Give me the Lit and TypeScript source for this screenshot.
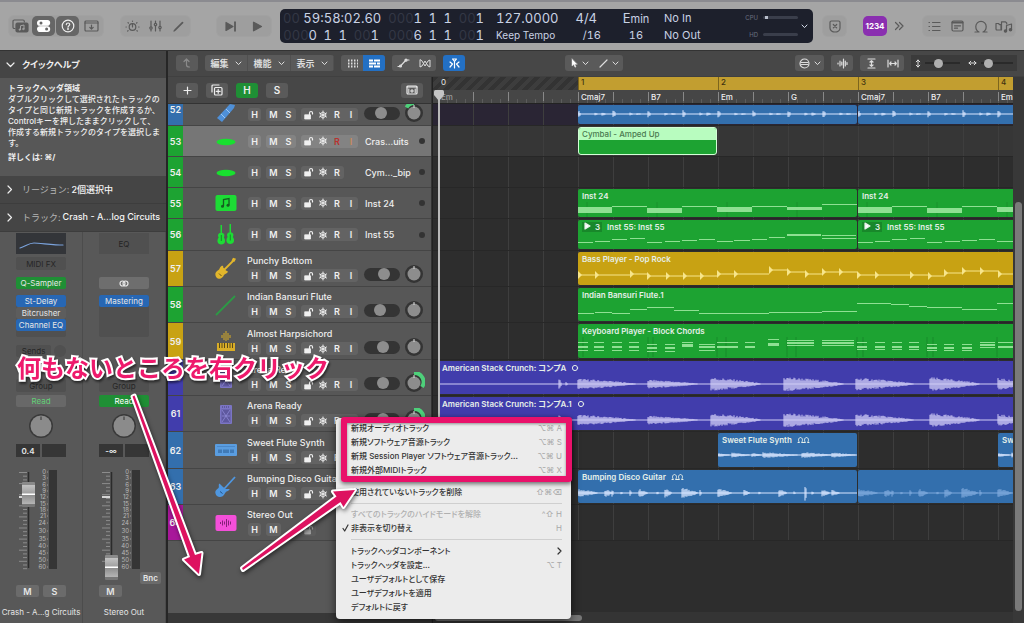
import { LitElement, html, svg, css, nothing } from "lit";
import { customElement, property } from "lit/decorators.js";
import { classMap } from "lit/directives/class-map.js";
import { styleMap } from "lit/directives/style-map.js";

const shared = css`
  * { box-sizing: border-box; }
  button, input { font: inherit; color: inherit; margin: 0; padding: 0; border: 0; background: none; }
  button { display: flex; align-items: center; justify-content: center; white-space: nowrap; line-height: 1; }
  svg { display: block; flex: none; }
  h2, p, ul, ol { margin: 0; padding: 0; list-style: none; font-weight: inherit; font-size: inherit; }
`;

type Shape = unknown;
const icon = (w: number, h: number, body: Shape) => html`<svg width=${w} height=${h} viewBox="0 0 ${w} ${h}" fill="none"
  stroke="currentColor" stroke-width="1.2" stroke-linecap="round" stroke-linejoin="round" aria-hidden="true">${body}</svg>`;

const chevron = () => icon(7, 5, svg`<path d="M1 1 3.500 3.600 6 1" stroke-width="1"/>`);

/* ---------------------------------------------------------------- toolbar */

const barIcons: Record<string, Shape> = {
  library: icon(17, 14, svg`<path d="M3 9.500H2.300A1.300 1.300 0 0 1 1 8.200V2.300A1.300 1.300 0 0 1 2.300 1H11a1.300 1.300 0 0 1 1.300 1.300V3"/>
    <rect x="4" y="4" width="12" height="9" rx="1.500" fill="currentColor"/>
    <path d="M8.500 10.500V6.800L12 6v3.800" stroke="#a2a2a2" stroke-width="1"/><circle cx="7.800" cy="10.600" r=".8" fill="#a2a2a2" stroke="#a2a2a2" stroke-width=".6"/><circle cx="11.300" cy="10" r=".8" fill="#a2a2a2" stroke="#a2a2a2" stroke-width=".6"/>`),
  inspector: icon(14, 12, svg`<rect x=".6" y=".6" width="12" height="4.600" rx="2.300" fill="#fff" stroke="#fff"/><circle cx="4" cy="2.900" r="1.500" fill="#666" stroke="none"/>
    <rect x=".6" y="6.800" width="12" height="4.600" rx="2.300" fill="#fff" stroke="#fff"/><circle cx="9.600" cy="9.100" r="1.500" fill="#666" stroke="none"/>`),
  help: icon(14, 14, svg`<circle cx="7" cy="7" r="5.800"/><path d="M5.300 5.600C5.400 3.400 8.800 3.500 8.700 5.500 8.700 6.700 7 6.700 7 8.200"/><circle cx="7" cy="10" r=".4"/>`),
  drop: icon(15, 12, svg`<rect x="1" y="1" width="13" height="10" rx="1"/><path d="M1 3h13M7.500 5v4M5.800 7.400l1.700 1.700 1.700-1.700"/>`),
  dial: icon(15, 13, svg`<circle cx="7.500" cy="7" r="3.300"/><path d="M7.500 7V4M7.500 1v.3M3 2.600l.4.4M12 2.600l-.4.4M1 7h.3M14 7h-.3M2.700 11l.4-.4M12.300 11l-.4-.4"/>`),
  mixer: icon(13, 12, svg`<path d="M2 1v5.500M2 9.500V11M6.500 1v2M6.500 6V11M11 1v5M11 9V11"/><circle cx="2" cy="8" r="1.200"/><circle cx="6.500" cy="4.500" r="1.200"/><circle cx="11" cy="7.500" r="1.200"/>`),
  pencil: icon(11, 11, svg`<path d="M2.200 8.800 9.500 1.700" stroke-width="1.800"/><path d="M1 10l.7-.7"/>`),
  next: icon(14, 11, svg`<path d="M2 1.500v8l7-4z" fill="currentColor"/><path d="M11 1.200v8.600" stroke-width="1.800"/>`),
  play: icon(11, 11, svg`<path d="M1.500 1.200v8.600l8-4.300z" fill="currentColor"/>`),
  replace: icon(12, 13, svg`<path d="M1 2.500C1 1.600 1.600 1 2.500 1h7c.9 0 1.500.6 1.500 1.500V8c0 2.500-2.500 4-5 4S1 10.500 1 8z"/><path d="M4.300 4.500l3.400 3.400M7.700 4.500 4.300 7.900"/>`),
  more: icon(10, 10, svg`<path d="M1.500 1.500 5 5 1.500 8.500M5.500 1.500 9 5 5.500 8.500"/>`),
  list: icon(13, 11, svg`<path d="M4.500 1.500H12M4.500 5.500H12M4.500 9.500H12M1 1.500h.5M1 5.500h.5M1 9.500h.5"/>`),
  note: icon(13, 12, svg`<rect x="1" y="1" width="11" height="10" rx="1.500"/><path d="M1.500 2.500h10" stroke-width="2"/><path d="M3.500 5.800h6M3.500 8.200h3"/>`),
  loop: icon(14, 13, svg`<path d="M1 12h4C2.800 11 1.800 9 1.800 6.500a5.200 5.200 0 0 1 10.400 0C12.200 9 11.200 11 9 12h4"/>`),
  media: icon(18, 13, svg`<path d="M3.500 10H2a1 1 0 0 1-1-1V3.500h2.500l1 1.200H6V10H4M6.500 10V1.800h4l1.200 1.200v1"/><path d="M11.500 11V5.500L16.500 4v5.600"/><circle cx="10.500" cy="11" r="1.200" fill="currentColor"/><circle cx="15.500" cy="9.800" r="1.200" fill="currentColor"/>`),
};

@customElement("control-bar")
class ControlBar extends LitElement {
  static styles = [shared, css`
    :host { display: grid; grid-template-columns: 280px minmax(0, 533px) 1fr; align-items: center; height: 50px;
      background: #a5a5a5; border-top: 2px solid #8b8b90; color: #5a5a5a; }
    .left, .right { display: flex; align-items: center; }
    .left { padding-left: 9px; }
    .right { padding: 0 9px 0 10px; }
    .group { display: flex; border-radius: 5px; background: #9e9e9e; box-shadow: 0 0 0 1px #9a9a9a55; }
    .group button { width: 23px; height: 20px; border-radius: 5px; }
    .group.play button { width: 27px; }
    .modes { margin-left: 18px; }
    .play { margin-left: 27px; }
    button.on { background: #666; color: #eee; margin-right: 1px; }
    .count { width: 24px; height: 20px; margin-left: 17px; border-radius: 5px; background: #8a2fb0; color: #fff; font-size: 8px; font-weight: 700; }
    .more { margin-left: 7px; }
    .views { margin-left: auto; }
    .lcd { display: flex; height: 34px; padding: 0 5px 0 3px; background: #1d202c; border-radius: 5px; color: #c9d2e4; overflow: hidden; }
    .lcd > div { display: grid; grid-template-rows: 17px 17px; align-items: center; white-space: nowrap; }
    .num { font-size: 13px; font-variant-numeric: tabular-nums; }
    .ghost { color: #333745; }
    .row { display: flex; }
    .row i { font-style: normal; width: 15px; text-align: right; }
    .row .wide { width: 34px; text-align: right; }
    .row .mid { width: 32px; text-align: right; }
    .time { width: 97px; }
    .pos { width: 103px; padding-left: 8px; }
    .tempo { width: 62px; margin-left: 13px; }
    .small { font-size: 11px; }
    .tempo .small { font-size: 10px; }
    .sig { width: 43px; text-align: right; }
    .sig span:first-child { padding-right: 4px; }
    .key { width: 44px; margin-left: 13px; text-align: center; }
    .midi { width: 80px; margin-left: 6px; }
    .load { width: 54px; font-size: 6px; color: #6b7080; }
    .load span { display: flex; align-items: center; gap: 5px; }
    .load b { flex: 1; height: 3px; border-radius: 2px; background: #3a3e4b; }
    .load b.used { background: linear-gradient(to right, #3a3e4b 2px, #b9bfcc 2px 5px, #3a3e4b 5px); }
    .load em { width: 14px; font-style: normal; text-align: right; }
    .open { margin-left: auto; color: #d5dcea; }
  `];

  private button(name: string, label: string, on = false) {
    return html`<button class=${classMap({ on })} aria-label=${label}>${barIcons[name]}</button>`;
  }

  render() {
    return html`
      <div class="left">
        <div class="group">${this.button("library", "Library")}${this.button("inspector", "Inspector", true)}${this.button("help", "Quick Help", true)}${this.button("drop", "Toolbar")}</div>
        <div class="group modes">${this.button("dial", "Smart Controls")}${this.button("mixer", "Mixer")}${this.button("pencil", "Editors")}</div>
        <div class="group play">${this.button("next", "Forward")}${this.button("play", "Play")}</div>
      </div>
      <div class="lcd">
        <div class="time num"><span><span class="ghost">00</span> 59:58:02.60</span>
          <span class="row"><span class="wide"><span class="ghost">000</span>0</span><i>1</i><i>1</i><span class="mid"><span class="ghost">00</span>1</span></span></div>
        <div class="pos num">
          ${["1", "6"].map((n) => html`<span class="row"><span class="wide"><span class="ghost">000</span>${n}</span><i>1</i><i>1</i><span class="mid"><span class="ghost">00</span>1</span></span>`)}
        </div>
        <div class="tempo num"><span>127.0000</span><span class="small">Keep Tempo</span></div>
        <div class="sig num"><span>4/4</span><span class="small">/16</span></div>
        <div class="key num"><span>E<span class="small">min</span></span><span class="small">16</span></div>
        <div class="midi small"><span>No In</span><span>No Out</span></div>
        <div class="load"><span><em>CPU</em><b class="used"></b></span><span><em>HD</em><b></b></span></div>
        <button class="open" aria-label="Display mode">${chevron()}</button>
      </div>
      <div class="right">
        <div class="group">${this.button("replace", "Replace")}</div>
        <button class="count" aria-label="Count-in">1234</button>
        <button class="more" aria-label="More">${barIcons.more}</button>
        <div class="group views">${this.button("list", "Lists")}${this.button("note", "Notes")}${this.button("loop", "Loops")}${this.button("media", "Media")}</div>
      </div>`;
  }
}

/* -------------------------------------------------------------- inspector */

const scale: [string, number][] = [["0", 2], ["3", 8], ["6", 15], ["9", 21], ["12", 27], ["15", 34], ["18", 40], ["21", 46],
  ["24", 53], ["30", 61], ["35", 69], ["40", 76], ["45", 83], ["50", 90], ["60", 97]];

@customElement("channel-strip")
class ChannelStrip extends LitElement {
  @property({ type: Boolean }) output = false;
  @property() name = "";

  static styles = [shared, css`
    :host { display: flex; flex-direction: column; align-items: center; padding: 1px 16px 0; border-right: 1px solid #4c4c4c; font-size: 8px; color: #e6e6e6; min-width: 0; }
    button, .slot { width: 50px; height: 12px; border-radius: 2px; }
    .eq { display: grid; place-items: center; width: 50px; height: 21px; background: #333539; }
    .output .eq { background: #505050; color: #242424; }
    .strip { display: flex; flex-direction: column; align-items: center; width: 50px; }
    .dim { background: #505050; color: #262626; }
    .fx { margin-top: 3px; height: 13px; }
    .inst { margin-top: 7px; background: #1f8f35; }
    .output .inst { background: #6e6e6e; }
    .inserts { display: flex; flex-direction: column; margin-top: 6px; width: 50px; height: 42px; background: #505050; border-radius: 2px; }
    .blue { background: #2767b4; }
    .grey { background: #5d5d5d; }
    .sends { display: flex; gap: 3px; width: 50px; margin-top: 8px; }
    .sends button { width: 36px; }
    .sends .round { width: 12px; border-radius: 6px; }
    .hidden { visibility: hidden; }
    .group { margin-top: 22px; height: 13px; }
    .read { margin-top: 3px; background: #686868; color: #63cf77; }
    .output .read { background: #1f8f35; color: #fff; }
    .knob { margin: 6px 0 5px; }
    .values { display: flex; gap: 2px; }
    .values span { display: grid; place-items: center; width: 24px; height: 13px; background: #363636; font-weight: 600; }
    .fader { display: grid; margin-top: 13px; width: 50px; height: 102px; }
    .fader > * { grid-area: 1 / 1; }
    .fader svg { overflow: visible; }
    .fader input { -webkit-appearance: none; appearance: none; writing-mode: vertical-lr; direction: rtl; width: 13px; height: 114px; margin-left: 6px; }
    .fader input::-webkit-slider-thumb { -webkit-appearance: none; width: 13px; height: 25px; border-radius: 1px;
      background: linear-gradient(#8a8a8a 0 3px, #c3c3c3 3px, #a2a2a2 11px, #fff 12px 13px, #8e8e8e 13px, #b5b5b5 22px, #777 22px); }
    text { font-size: 6px; fill: #b8b8b8; stroke: none; }
    .ms { display: flex; gap: 4px; width: 50px; margin-top: 11px; }
    .ms button { width: 23px; background: #6b6b6b; font-weight: 600; font-size: 9px; }
    .bnc { display: flex; justify-content: flex-end; height: 2px; width: 48px; margin-left: 26px; }
    .bnc button { width: 21px; background: #6b6b6b; font-weight: 600; flex: none; }
    .name { margin: 10px -16px 0; font-size: 8px; white-space: nowrap; }
  `];

  render() {
    const out = this.output;
    return html`<div class=${classMap({ strip: true, output: out })}>
      <div class="eq">${out ? "EQ" : icon(48, 20, svg`<path d="M3 14C9 12 12 9 17 9s20 2 29 2" stroke="#7aa2dc"/>`)}</div>
      ${out ? html`<div class="fx"></div>` : html`<button class="fx dim">MIDI FX</button>`}
      <button class="inst">${out ? icon(10, 7, svg`<circle cx="3.500" cy="3.500" r="2.500"/><circle cx="6.500" cy="3.500" r="2.500"/>`) : "Q-Sampler"}</button>
      <div class="inserts">${out ? html`<button class="blue">Mastering</button>` : html`<button class="blue">St-Delay</button><button class="grey">Bitcrusher</button><button class="blue">Channel EQ</button>`}</div>
      <div class=${classMap({ sends: true, hidden: out })}><button class="dim">Sends</button><button class="dim round" aria-label="Send level"></button></div>
      <button class="group dim">Group</button>
      <button class="read">Read</button>
      <svg class="knob" width="26" height="26" viewBox="0 0 26 26" role="img" aria-label="Pan"><circle cx="13" cy="13" r="12" fill="#3a3a3a"/><circle cx="13" cy="13" r="10.500" fill="#8b8b8b"/><path d="M13 3.500v3.500" stroke="#333"/><path d="M7 25h12v2H7z" fill="#585858"/></svg>
      <div class="values"><span>${out ? "-∞" : "0.4"}</span><span></span></div>
      <div class="fader">
        <svg width="50" height="102" viewBox="0 0 50 102" aria-hidden="true">
          <path d="M12.500 2v96" stroke="#2b2b2b" stroke-width="1.500"/>
          ${Array.from({ length: 27 }, (_, i) => {
            const y = 2.5 + i * 3.7;
            return svg`<path d="M${i % 3 ? 7 : 3} ${y}H11" stroke="#999" stroke-width=".8"/>`;
          })}
          <path d="M3 27h8" stroke="#fff" stroke-width="1.500"/>
          <rect x="33" y="0" width="8" height="99" fill="#353535"/>
          ${scale.map(([t, y]) => svg`<text x="30" y=${y + 2} text-anchor="end">${t}</text><path d="M31 ${y}h1" stroke="#999"/>`)}
        </svg>
        <input type="range" aria-label="Volume" min="0" max="100" .value=${out ? "5" : "87"} />
      </div>
      ${out ? html`<div class="bnc"><button>Bnc</button></div>` : html`<div class="bnc"></div>`}
      <div class="ms"><button>M</button>${out ? nothing : html`<button>S</button>`}</div>
      <div class="name">${this.name}</div>
    </div>`;
  }
}

@customElement("inspector-panel")
class InspectorPanel extends LitElement {
  static styles = [shared, css`
    :host { display: flex; flex-direction: column; background: #585858; border-right: 2px solid #262626; color: #eee; overflow: hidden; }
    h2, .row { display: flex; align-items: center; gap: 7px; height: 27px; padding-left: 6px; background: #454545; font-size: 9px; font-weight: 600; flex: none; }
    h2 { font-feature-settings: "palt"; }
    .row { height: 28px; gap: 9px; padding-left: 7px; font-weight: 400; color: #b5b5b5; border-bottom: 1px solid #3d3d3d; white-space: nowrap; }
    .row span { display: flex; gap: 2px; }
    .row svg { color: #eee; }
    .row b { font-weight: 500; color: #f4f4f4; }
    .help { height: 98px; padding: 4px 8px 0; font-size: 8px; font-weight: 500; line-height: 11px; background: #575757; flex: none; white-space: nowrap; }
    .help b { display: block; font-weight: 700; line-height: 12px; }
    .help p + b { margin-top: 2px; }
    .strips { display: grid; grid-template-columns: 1fr 1fr; flex: 1; }
  `];
  render() {
    const closed = icon(6, 9, svg`<path d="M1 1l3.500 3.500L1 8"/>`);
    return html`
      <h2>${icon(9, 6, svg`<path d="M1 1l3.500 3.500L8 1"/>`)}クイックヘルプ</h2>
      <div class="help"><b>トラックヘッダ領域</b>
        <p>ダブルクリックして選択されたトラックの<br />タイプと同じ新規トラックを作成するか、<br />Controlキーを押したままクリックして、<br />作成する新規トラックのタイプを選択しま<br />す。</p>
        <b>詳しくは: ⌘/</b></div>
      <div class="row">${closed}<span>リージョン:<b>2個選択中</b></span></div>
      <div class="row">${closed}<span>トラック:<b>Crash - A...log Circuits</b></span></div>
      <div class="strips"><channel-strip name="Crash - A...g Circuits"></channel-strip><channel-strip output name="Stereo Out"></channel-strip></div>`;
  }
}

/* ----------------------------------------------------------------- tracks */

interface Region { col: number; span: number; title?: string; badge?: boolean; mark?: string; art?: string; kind?: string; }
interface Track { n: string; h: number; color: string; name?: string; glyph: string; short?: boolean; selected?: boolean; last?: boolean; noInput?: boolean;
  vol?: number; green?: string; regions?: Region[]; }

const GREEN = "#1da332", GOLD = "#c8a213", VIOLET = "#413dac", BLUE = "#336fad";

const tracks: Track[] = [
  { n: "52", h: 22, color: BLUE, glyph: "stick", vol: 45, green: "M5.500 7.500A9 9 0 0 1 13 3", regions: [{ col: 5, span: 8, art: "hits" }, { col: 13, span: 5, art: "hits" }] },
  { n: "53", h: 31, color: GREEN, glyph: "cymbal", name: "Cras...uits", short: true, selected: true, regions: [{ col: 5, span: 4, title: "Cymbal - Amped Up", kind: "picked" }] },
  { n: "54", h: 31, color: GREEN, glyph: "cymbal", name: "Cym..._bip", short: true, noInput: true },
  { n: "55", h: 31, color: GREEN, glyph: "music", name: "Inst 24", short: true, regions: [{ col: 5, span: 8, title: "Inst 24", art: "inst24" }, { col: 13, span: 5, title: "Inst 24", art: "inst24" }] },
  { n: "56", h: 32, color: GREEN, glyph: "violins", name: "Inst 55", short: true, regions: [{ col: 5, span: 8, title: "Inst 55: Inst 55", badge: true, art: "inst55" }, { col: 13, span: 5, title: "Inst 55: Inst 55", badge: true, art: "inst55" }] },
  { n: "57", h: 36, color: GOLD, glyph: "bass", name: "Punchy Bottom", vol: 66, regions: [{ col: 5, span: 13, title: "Bass Player - Pop Rock", art: "bass" }] },
  { n: "58", h: 36, color: GREEN, glyph: "flute", name: "Indian Bansuri Flute", vol: 38, regions: [{ col: 5, span: 13, title: "Indian Bansuri Flute.1", art: "flute" }] },
  { n: "59", h: 37, color: GOLD, glyph: "keys", name: "Almost Harpsichord", vol: 58, regions: [{ col: 5, span: 13, title: "Keyboard Player - Block Chords", art: "chords", kind: "green" }] },
  { n: "60", h: 36, color: VIOLET, glyph: "amp", name: "Arena Ready", vol: 60, green: "M13 3A9 9 0 0 1 21 17", regions: [{ col: 1, span: 17, title: "American Stack Crunch: コンプA", mark: "ring", art: "crunch" }] },
  { n: "61", h: 36, color: VIOLET, glyph: "amp", name: "Arena Ready", vol: 60, green: "M13 3A9 9 0 0 1 21 17", regions: [{ col: 1, span: 17, title: "American Stack Crunch: コンプA.1", mark: "ring", art: "crunch" }] },
  { n: "62", h: 37, color: BLUE, glyph: "synth", name: "Sweet Flute Synth", vol: 50, regions: [{ col: 9, span: 4, title: "Sweet Flute Synth", mark: "loop", art: "synth" }, { col: 17, span: 4, title: "Sweet Flute Synth", art: "synth" }] },
  { n: "63", h: 36, color: BLUE, glyph: "guitar", name: "Bumping Disco Guitar", vol: 50, regions: [{ col: 5, span: 8, title: "Bumping Disco Guitar", mark: "loop", art: "disco" }, { col: 13, span: 5, art: "disco", kind: "faded" }] },
  { n: "64", h: 36, color: "#a8179a", glyph: "output", name: "Stereo Out", last: true },
];

const glyphs: Record<string, Shape> = {
  stick: svg`<path d="M3 15 16 1l5 1-1 3L8 19z" fill="#4f90d8"/><path d="M7 11l4 4M12 6l4 4" stroke="#9cc6f5"/>`,
  cymbal: svg`<ellipse cx="12" cy="13" rx="9.500" ry="3.300" fill="#18e02f"/>`,
  music: svg`<rect x="1.500" y="4" width="21" height="16" rx="2" fill="#1ddb35"/><path d="M9.500 15V8.500L15 7.500V14" stroke="#145f1f" stroke-width="1.300" fill="none"/><circle cx="8.500" cy="15.200" r="1.500" fill="#145f1f"/><circle cx="14" cy="14.200" r="1.500" fill="#145f1f"/>`,
  violins: svg`<g fill="#1ddb35"><path d="M6.500 2h1.500v8c2.500 0 3 2.500 1.800 4.500C12 17 11.500 21.500 7.300 21.500S2.500 17 4.700 14.500C3.500 12.500 4 10 6.500 10z"/><path d="M15.500 1H17v8.500c2.500 0 3 2.500 1.800 4.500 2.200 2.500 1.700 7-2.500 7s-4.800-4.500-2.600-7c-1.200-2-.7-4.500 1.800-4.500z"/></g><path d="M7.300 12v6M16.300 11.500v6" stroke="#157a22" stroke-width=".8"/>`,
  bass: svg`<path d="M9 14 20 3" stroke="#e2b62c" stroke-width="1.800"/><path d="M19 .8l3 1-1.500 3-3-1z" fill="#e2b62c"/><path d="M1.500 18.500c-.8-2.500 1-4.500 3-5.500 1.500-.8 1-3 3-4 1.200-.5 2 .3 1.700 1.500l3 3.200c1.300-.2 2 .8 1.300 1.800-1 1.500-2.500 1-3.500 2.500-1 2-2.500 4-5 3.800-1.800-.1-3-1.500-3.500-3.300z" fill="#e2b62c"/><path d="M5 16.500l2.500 2.500" stroke="#6b5717"/>`,
  guitar: svg`<path d="M10 14 21 2" stroke="#4f97e0" stroke-width="1.800"/><path d="M1.500 18.500c-.8-3 1.500-4 3-5.500 1-1-.5-3.500 1-4.500l3 3 3 2.500 4 0c0 2-3 2-4 3.500s-2 4.500-5.500 4.500c-2.500 0-4-1.500-4.500-3.500z" fill="#4f97e0"/><path d="M6 16.500l2.500 2" stroke="#22548c"/>`,
  flute: svg`<path d="M2 22 21 3" stroke="#2c9a45" stroke-width="1.800"/>`,
  keys: svg`<path d="M8 6v3M10 4v7M12 2v10M14 4v7M16 6v3" stroke="#d9ad27"/><rect x="3" y="14" width="18" height="8" fill="#d9ad27"/><path d="M5.500 14v5M8 14v5M10.500 14v5M13.500 14v5M16 14v5M18.500 14v5" stroke="#59491a"/>`,
  amp: svg`<rect x="6" y="3" width="12" height="19" rx="1" fill="#7b75c4"/><path d="M8 5h8" stroke="#474277" stroke-dasharray="1 1"/><rect x="7.500" y="7.500" width="9" height="13" fill="#5e589e"/><path d="M8 8l8 12M16 8 8 20M8 14h8" stroke="#8f8ad6" stroke-width=".8"/>`,
  synth: svg`<rect x="1" y="6" width="22" height="12" rx="1" fill="#5a9de0"/><path d="M3 8.500h18" stroke="#4480bf" stroke-width=".7"/><path d="M5 11.500v3.500M7 11.500v3.500M10 11.500v3.500M12 11.500v3.500M14 11.500v3.500M17 11.500v3.500M19 11.500v3.500" stroke="#26588f"/>`,
  output: svg`<rect x="1.500" y="4" width="21" height="16" rx="2" fill="#f44fd9"/><path d="M6.500 11v2M8.500 9.500v5M10.500 10.500v3M12.500 8v8M14.500 9.500v5M16.500 10.500v3" stroke="#86207a"/>`,
};

@customElement("track-header")
class TrackHeader extends LitElement {
  @property({ attribute: false }) track!: Track;
  static styles = [shared, css`
    :host { display: flex; align-items: flex-end; overflow: hidden; background: #575757; border-bottom: 1px solid #454545; color: #eee; }
    :host([selected]) { background: #767676; }
    .n { display: flex; align-items: center; align-self: stretch; justify-content: center; width: 15px; font-size: 9px; font-weight: 600; flex: none; }
    .n.top { align-items: flex-start; }
    .glyph { width: 24px; margin: 0 9px 0 31px; align-self: center; }
    .body { display: flex; flex-direction: column; justify-content: space-between; width: 112px; height: 36px; padding: 4px 0 4px; flex: none; }
    .short { align-self: center; justify-content: center; }
    .name { font-size: 9px; font-weight: 500; line-height: 13px; white-space: nowrap; }
    .ctl { display: flex; gap: 5px; margin-left: 1px; }
    .ctl span { display: flex; background: #636363; border-radius: 3px; }
    .ctl button { width: 15px; height: 13px; font-size: 9px; font-weight: 600; color: #f0f0f0; }
    .ctl span:first-child button { width: 13px; }
    .ctl span:nth-child(3) button { width: 14px; }
    .ctl span:nth-child(3) button:first-child { width: 15px; }
    :host([selected]) .ctl span { background: #838383; }
    :host .ctl .rec { color: #b8322e; }
    :host .ctl .inp { color: #c98a5a; }
    .ctl .faint { margin-left: 15px; opacity: .5; }
    .side { display: flex; align-items: center; gap: 3px; height: 24px; margin-left: 5px; flex: none; }
    .side.short { height: auto; justify-content: space-between; margin-left: 6px; width: 60px; }
    input { -webkit-appearance: none; appearance: none; width: 36px; height: 13px; border-radius: 7px; background: #343434; padding: 0 5px; }
    input::-webkit-slider-thumb { -webkit-appearance: none; width: 12px; height: 12px; border-radius: 6px; background: #8d8d8d; }
    .dot { width: 6px; height: 6px; border-radius: 3px; background: #333; }
  `];
  render() {
    const t = this.track;
    const lock = icon(10, 10, svg`<path d="M5.500 4.500V3a1.500 1.500 0 0 1 3 0v1"/><rect x="1" y="4.800" width="5.500" height="4.200" fill="currentColor" stroke-width=".8"/>`);
    const snow = icon(10, 10, svg`<path d="M5 1v8M1.500 3l7 4M8.500 3l-7 4" stroke-width="1"/><circle cx="5" cy="5" r="2.800" stroke-width=".7"/>`);
    const controls = html`<div class="ctl">
      <span><button>H</button></span>
      <span><button>M</button>${t.last ? nothing : html`<button>S</button>`}</span>
      ${t.last ? html`<span class="faint"><button aria-label="Protect">${lock}</button></span>` : html`<span><button aria-label="Protect">${lock}</button><button aria-label="Freeze">${snow}</button><button class=${classMap({ rec: !!t.selected })}>R</button>${t.noInput ? nothing : html`<button class=${classMap({ inp: !!t.selected })}>I</button>`}</span>`}
    </div>`;
    return html`
      <div class=${classMap({ n: true, top: t.h < 30 })} style=${styleMap({ background: t.color })}>${t.n}</div>
      <svg class="glyph" width="24" height="24" viewBox="0 0 24 24" aria-hidden="true">${glyphs[t.glyph]}</svg>
      ${t.short
        ? html`<div class="body short">${controls}</div><div class="side short"><span class="name">${t.name}</span><span class="dot"></span></div>`
        : html`<div class="body"><div class="name">${t.name}</div>${controls}</div>
          ${t.last ? nothing : html`<div class="side"><input type="range" aria-label="Volume" .value=${String(t.vol)} />
            <svg width="22" height="22" viewBox="2 2 22 22" role="img" aria-label="Pan"><circle cx="13" cy="13" r="9" fill="#343434"/>
              ${t.green ? svg`<path d=${t.green} stroke="#4ed07a" stroke-width="4" fill="none"/>` : nothing}
              <circle cx="13" cy="13" r="6.500" fill="#8d8d8d"/><path d="M13 5v3" stroke="#ddd"/></svg></div>`}`}`;
  }
}

/* --------------------------------------------------------------- timeline */

/** Rounded pseudo noise in 0..1, stable for every x. */
const noise = (x: number) => { const v = Math.sin(x * 12.9898) * 43758.5453; return v - Math.floor(v); };

/** Vertical strokes around a centre line; each burst is [start, width, peak]. */
const wave = (cy: number, width: number, bursts: number[][]) => {
  let d = `M0 ${cy}H${width}`;
  for (const [x, w, a] of bursts) {
    for (let i = 0; i < w; i += 1) {
      const fade = Math.pow(1 - i / w, 0.65) * a;
      const k = Math.max(0.5, fade * (0.5 + 0.5 * noise(x + i)));
      const m = Math.max(0.5, fade * (0.6 + 0.4 * noise(x + i + 91)));
      d += `M${x + i} ${(cy - k).toFixed(1)}V${(cy + m).toFixed(1)}`;
    }
  }
  return svg`<path d=${d} fill="none"/>`;
};
const notes = (list: number[][]) => list.map(([x, w, y, h = 1]) => svg`<rect x=${x} y=${y} width=${w} height=${h} stroke="none"/>`);

const range = (n: number) => Array.from({ length: n }, (_, i) => i);
const hitBursts = range(8).flatMap((i) => [[i * 35, 3, 4], [i * 35 + 17, 3, 1.5], [i * 35 + 24, 4, i % 3 ? 1 : 2]]);
const crunchBursts = [[121, 3, 5], [128, 2, 2], [140, 58, 5.5], [210, 50, 4.5], [273, 50, 7], [346, 60, 7.5], [418, 58, 6.5], [492, 50, 7], [560, 30, 6]];
const discoBursts = [[0, 20, 4], [27, 8, 4], [34, 2, 4], [43, 2, 1.5], [52, 2, 3], [61, 9, 4.5], [79, 2, 2], [87, 7, 4.5], [104, 16, 5.5], [122, 2, 3],
  [140, 14, 4.5], [166, 6, 3.5], [181, 2, 1.5], [201, 8, 4], [216, 2, 1.5], [227, 2, 8], [234, 2, 2], [244, 8, 3.5], [254, 8, 3]];
const bassHits = [[0, 23], [17, 23], [52, 22], [69, 24], [88, 24], [105, 24], [122, 24], [139, 22], [156, 22], [191, 18], [209, 20], [227, 22], [244, 20], [261, 20],
  [279, 23], [297, 23], [332, 23], [350, 24], [366, 21], [384, 19], [402, 19], [420, 22], [440, 22]];
const chordStacks: [number, number, number[]][] = [
  ...[0, 16, 34, 51].map((x) => [x, 10, [18, 22, 26]] as [number, number, number[]]),
  ...[69, 87].map((x) => [x, 10, [20, 23, 27]] as [number, number, number[]]),
  [104, 11, [18, 20, 22]], [121, 16, [20, 22, 26]], [139, 21, [18, 22]], [167, 10, [18, 22]], [190, 11, [15, 19, 21]], [209, 27, [16, 18, 21]], [244, 32, [16, 18, 21]],
  ...[279, 297, 314, 331].map((x) => [x, 10, [18, 22, 25]] as [number, number, number[]]),
  ...[349, 366, 384].map((x) => [x, 10, [20, 23, 26]] as [number, number, number[]]),
  [402, 15, [18, 20, 23]], [420, 20, [18, 22]],
];

const art: Record<string, () => unknown> = {
  hits: () => wave(9, 280, hitBursts),
  inst24: () => [svg`<path d="M9 13v15M79 13v15M149 13v15M219 13v15" stroke="#15782566"/>`,
    notes([[0, 34, 18, 6], [34, 35, 17], [69, 35, 19, 5], [104, 35, 17], [139, 35, 18, 5], [174, 35, 17], [209, 35, 18, 3], [244, 35, 15]])],
  inst55: () => notes([[0, 15, 22], [17, 15, 21], [34, 15, 19], [52, 15, 18], [69, 15, 22], [87, 15, 21], [104, 15, 20], [121, 16, 19], [139, 16, 21], [156, 16, 20],
    [174, 15, 19], [191, 16, 17], [209, 34, 14, 2], [244, 34, 15], [244, 34, 18]]),
  bass: () => [svg`<path fill="none" d=${bassHits.slice(0, -1).map(([x, y], i) => `M${x} ${y}H${bassHits[i + 1][0]}`).join("")}/>`,
    svg`<path stroke="none" d=${bassHits.map(([x, y]) => `M${x} ${y - 4}L${x + 4} ${y}L${x} ${y + 4}z`).join("")}/>`],
  flute: () => notes([[0, 16, 25], [17, 17, 24], [34, 18, 25], [52, 17, 21], [69, 27, 19], [96, 25, 22], [121, 70, 25], [191, 53, 24], [244, 35, 23], [279, 34, 15],
    [313, 18, 16], [331, 18, 18], [349, 35, 19], [384, 35, 21], [419, 21, 15]]),
  chords: () => [svg`<path d="M5 13v20M70 13v20M75 13v20M139 13v20M148 13v20M209 13v20M218 13v20M279 13v20M285 13v20M349 13v20M355 13v20M419 13v20" stroke="#15782588"/>`,
    notes(chordStacks.flatMap(([x, w, ys]) => ys.map((y, i) => [x, w, y, i === 1 ? 2 : 1])))],
  crunch: () => wave(23, 600, crunchBursts),
  synth: () => wave(22, 140, [[0, 12, 2], [14, 18, 2.5], [34, 10, 2], [45, 35, 3], [84, 30, 3], [114, 24, 2.5]]),
  disco: () => wave(23, 280, discoBursts),
};

@customElement("track-lanes")
class TrackLanes extends LitElement {
  static styles = [shared, css`
    :host { display: flex; flex-direction: column; min-width: 0; overflow: hidden; background: #2d2d2d; border-left: 1px solid #222; position: relative; }
    .ruler { display: flex; height: 13px; padding-left: 5px; flex: none; font-size: 8px; line-height: 11px; color: #e8e8e8; background: repeating-linear-gradient(135deg, #333 0 4px, #3d3d3d 4px 8px); }
    .ruler span { width: 140px; padding-left: 3px; flex: none; }
    .ruler .cycle { padding-left: 2px; background: #c29e30; color: #3d3210; border-left: 1px solid #7c651d; font-weight: 500; }
    .chords { display: grid; grid-template-columns: repeat(17, 35px); height: 14px; padding-left: 5px; flex: none; font-size: 8px; line-height: 15px; color: #eee; background: #464646; font-weight: 500;
      border-bottom: 1px solid #222; }
    .chords span { padding-left: 3px; overflow: hidden; background: linear-gradient(#888, #888) 0 2px / 1px 9px no-repeat,
      repeating-linear-gradient(to right, #5c5c5c 0 1px, transparent 1px 9px) 0 9px / 100% 100% no-repeat; }
    .chords .dim { color: #999; }
    .lane { display: grid; grid-template-columns: repeat(17, 35px); grid-template-rows: minmax(0, 1fr); padding: 1px 0 1px 5px; border-bottom: 1px solid #272727; overflow: hidden; flex: none;
      background: repeating-linear-gradient(to right, #3e3e3e 0 1px, transparent 1px 35px) 5px 0; }
    .lane.selected { background-color: #363636; }
    .lane.tinted { background-color: #2a2534; }
    .region { position: relative; display: grid; grid-template-rows: minmax(0, 1fr); grid-row: 1; overflow: hidden; border-radius: 2px; color: #e6efe9; fill: #8fe093; stroke: #d9e6ff; margin-right: 1px; }
    .region > * { grid-area: 1 / 1; }
    .title { display: flex; align-items: center; gap: 5px; height: 13px; padding-left: 4px; font-size: 8px; font-weight: 600; white-space: nowrap; font-feature-settings: "palt"; }
    .title svg { stroke: currentColor; fill: none; }
    .title kbd { display: flex; font: inherit; background: #14702388; gap: 4px; padding: 0 2px; }
    .art-bass { stroke: #f7e58a; fill: #f7e58a; }
    .picked { border: 1px solid #d3ffd6; border-radius: 3px; color: #4a7a50; }
    .picked .title { height: 12px; padding-left: 3px; background: #b8fcbf; font-weight: 500; }
    .faded { stroke: #7fa9dc; }
    .art-crunch { stroke: #d0cdf5; }
    .line { position: absolute; left: 5px; top: 14px; width: 2px; bottom: 82px; background: #b9b9b9; }
    .head { position: absolute; left: 0; top: 13px; }
    .empty { flex: 1; }
    .hscroll { height: 11px; background: #343434; flex: none; padding: 3px 2px; }
    .hscroll i { display: block; width: 147px; height: 6px; border-radius: 3px; background: #777; }
  `];

  private region(r: Region, t: Track) {
    const cls: Record<string, boolean> = { region: true };
    if (r.kind) cls[r.kind] = true;
    if (r.art) cls[`art-${r.art}`] = true;
    return html`<div class=${classMap(cls)} style=${styleMap({ gridColumn: `${r.col} / span ${r.span}`, background: r.kind === "green" ? GREEN : t.color })}>
      ${r.art ? html`<svg width="600" height="36" viewBox="0 0 600 36" aria-hidden="true">${art[r.art]()}</svg>` : nothing}
      ${r.title ? html`<div class="title">${r.badge ? html`<kbd>${icon(7, 8, svg`<path d="M1 1l5 3-5 3z" fill="#fff"/>`)} 3</kbd>` : nothing}${r.title}
        ${r.mark === "ring" ? icon(8, 8, svg`<circle cx="4" cy="4" r="2.600" stroke-width="1"/>`) : nothing}
        ${r.mark === "loop" ? icon(13, 8, svg`<path d="M1 6.500h1.500C.5 4 2 1.500 3.500 1.500S6.500 4 4.500 6.500h4C6.500 4 8 1.500 9.500 1.500S12.500 4 10.500 6.500H12" stroke-width="1"/>`) : nothing}</div>` : nothing}
    </div>`;
  }

  render() {
    return html`
      <div class="ruler"><span>0</span>${["1", "2", "3", "4"].map((n) => html`<span class="cycle">${n}</span>`)}</div>
      <div class="chords">${range(17).map((i) => html`<span class=${classMap({ dim: i === 0 })}>${({ 0: "Em", 4: "Cmaj7", 6: "B7", 8: "Em", 10: "G", 12: "Cmaj7", 14: "B7", 16: "Em" } as Record<number, string>)[i] ?? ""}</span>`)}</div>
      ${tracks.map((t, i) => html`<div class=${classMap({ lane: true, selected: !!t.selected, tinted: i === 0 })} style=${styleMap({ height: `${t.h}px` })}>${(t.regions ?? []).map((r) => this.region(r, t))}</div>`)}
      <div class="empty"></div>
      <div class="hscroll"><i></i></div>
      <div class="line"></div>
      <svg class="head" width="12" height="12" viewBox="0 0 12 12" aria-hidden="true"><path d="M1 1.500Q1 0 2.500 0h7Q11 0 11 1.500V5L6 11 1 5z" fill="#c4c4c4"/></svg>`;
  }
}

@customElement("arrange-area")
class ArrangeArea extends LitElement {
  static styles = [shared, css`
    :host { display: flex; flex-direction: column; min-width: 0; background: #474747; color: #ddd; }
    .tools { display: flex; align-items: center; gap: 7px; height: 26px; padding: 0 7px 1px 8px; flex: none; border-bottom: 1px solid #404040; }
    .set { display: flex; border-radius: 3px; background: #5a5a5a; overflow: hidden; }
    .set button { width: 22px; height: 16px; gap: 6px; font-size: 9px; font-weight: 600; }
    .set .text { width: 43px; border-right: 1px solid #505050; }
    .set .pair { width: 29px; gap: 4px; }
    .set .blue { background: #2370c4; color: #fff; }
    .set .off { color: #8a8a8a; }
    .pointer { margin-left: 93px; }
    .right { display: flex; gap: 7px; margin-left: auto; }
    .zoom { display: flex; align-items: center; gap: 4px; width: 53px; padding: 0 4px; background: #3b3b3b; height: 16px; }
    .zooms { display: flex; }
    input { -webkit-appearance: none; appearance: none; flex: 1; min-width: 0; height: 9px; background: linear-gradient(#2a2a2a, #2a2a2a) center / 100% 2px no-repeat; }
    input::-webkit-slider-thumb { -webkit-appearance: none; width: 9px; height: 9px; border-radius: 5px; background: #b0b0b0; }
    .main { display: grid; grid-template-columns: 264px minmax(0, 1fr) 11px; flex: 1; min-height: 0; }
    .headers { display: flex; flex-direction: column; background: #585858; border-right: 1px solid #333; min-height: 0; }
    .top { display: flex; align-items: center; gap: 8px; height: 27px; padding: 0 8px; background: #474747; border-bottom: 1px solid #333; flex: none; }
    .top button { width: 22px; height: 15px; border-radius: 3px; background: #5a5a5a; font-size: 10px; font-weight: 600; color: #eee; }
    .top .green { background: #1f8f35; }
    .top button:last-child { margin-left: auto; }
    track-header { flex: none; }
    .foot { height: 10px; margin-top: auto; background: #383838; flex: none; }
    .vscroll { background: #383838; padding: 125px 2px 12px; }
    .vscroll i { display: block; height: 100%; border-radius: 4px; background: #7a7a7a; }
  `];
  render() {
    return html`
      <div class="tools">
        <div class="set"><button class="off" aria-label="Up">${icon(9, 10, svg`<path d="M3.500 1 1 3.500M3.500 1 6 3.500M3.500 1v6q0 2 3 2"/>`)}</button></div>
        <div class="set">${["編集", "機能", "表示"].map((s) => html`<button class="text">${s}${chevron()}</button>`)}</div>
        <div class="set"><button aria-label="Grid">${icon(11, 9, svg`<path d="M1 1.500h10M1 4.500h10M1 7.500h10" stroke-width="2" stroke-dasharray="1.500 1.500" stroke-linecap="butt"/>`)}</button>
          <button class="blue" aria-label="Tracks">${icon(11, 9, svg`<path d="M0 1.500h4M5 1.500h6M0 4.500h7M8 4.500h3M0 7.500h4M5 7.500h6" stroke-width="2" stroke-linecap="butt"/>`)}</button></div>
        <div class="set"><button aria-label="Automation">${icon(13, 10, svg`<path d="M1 8.500h2L9 2h3"/><circle cx="3.500" cy="8" r="1"/><circle cx="9" cy="2.200" r="1"/>`)}</button>
          <button aria-label="Flex">${icon(12, 9, svg`<path d="M1 1v7l2-1 3-5 3 5 2 1V1L9 2 6 7 3 2z" stroke-width="1"/>`)}</button></div>
        <div class="set"><button class="blue" aria-label="Catch">${icon(11, 11, svg`<path d="M5.500 3.500V10M3.500 1h4l-2 2.500zM1 4l2.500 2L1 9M10 4 7.500 6 10 9"/>`)}</button></div>
        <div class="set pointer"><button class="pair" aria-label="Pointer tool">${icon(7, 10, svg`<path d="M1 1v7l1.700-1.500L4 9.300l1-.5-1.200-2.600H6z" fill="#fff" stroke-width=".5"/>`)}${chevron()}</button>
          <button class="pair" aria-label="Pencil tool">${icon(9, 9, svg`<path d="M1 8 8 1"/>`)}${chevron()}</button></div>
        <div class="right">
          <div class="set"><button class="pair" aria-label="Snap">${icon(11, 11, svg`<circle cx="5.500" cy="5.500" r="4.500"/><path d="M2 4.500h7M2 6.500h7" stroke-width="1"/>`)}${chevron()}</button></div>
          <div class="set"><button aria-label="Waveform zoom">${icon(11, 11, svg`<path d="M1 5v1M3 3v5M4.800 4v3M6.500 1v9M8.300 3v5M10 4.500v2"/>`)}</button></div>
          <div class="set"><button aria-label="Fit vertically">${icon(9, 11, svg`<path d="M1 1h7M1 10h7M4.500 3v5M3 4l1.500-1.300L6 4M3 7l1.500 1.300L6 7"/>`)}</button>
            <button aria-label="Fit horizontally">${icon(12, 9, svg`<path d="M1 1v7M11 1v7M3 4.500h6M4 3 2.700 4.500 4 6M8 3l1.300 1.500L8 6"/>`)}</button></div>
          <div class="zooms">
            <label class="zoom">${icon(6, 9, svg`<path d="M3 1v7M1.200 2.800 3 1l1.800 1.800M1.200 6.200 3 8l1.800-1.800" stroke-width="1"/>`)}<input type="range" aria-label="Vertical zoom" value="33" /></label>
            <label class="zoom">${icon(9, 6, svg`<path d="M1 3h7M2.800 1.200 1 3l1.800 1.800M6.200 1.200 8 3 6.200 4.800" stroke-width="1"/>`)}<input type="range" aria-label="Horizontal zoom" value="14" /></label>
          </div>
        </div>
      </div>
      <div class="main">
        <div class="headers">
          <div class="top">
            <button aria-label="New track">${icon(9, 9, svg`<path d="M4.500 1v7M1 4.500h7"/>`)}</button>
            <button aria-label="Duplicate track">${icon(12, 12, svg`<rect x="3.500" y="3.500" width="7.500" height="7.500" rx="1"/><path d="M1 8V2a1 1 0 0 1 1-1h6M7.200 5.300v4M5.200 7.300h4"/>`)}</button>
            <button class="green">H</button><button>S</button>
            <button aria-label="Configure header">${icon(12, 10, svg`<rect x="1" y="1" width="10" height="8" rx="1"/><path d="M1 2h10M6 4.500v3M4.500 6h3M2.800 4v4M9.200 4v4" stroke-width="1"/>`)}</button>
          </div>
          ${tracks.map((t) => html`<track-header .track=${t} ?selected=${!!t.selected} style=${styleMap({ height: `${t.h}px` })}></track-header>`)}
          <div class="foot"></div>
        </div>
        <track-lanes></track-lanes>
        <div class="vscroll"><i></i></div>
      </div>`;
  }
}

/* ------------------------------------------------------------------- menu */

interface Item { label: string; keys?: string; disabled?: boolean; checked?: boolean; sub?: boolean; }
const menu: Item[][] = [
  [{ label: "新規オーディオトラック", keys: "⌥⌘ A" }, { label: "新規ソフトウェア音源トラック", keys: "⌥⌘ S" }, { label: "新規 Session Player ソフトウェア音源トラック...", keys: "⌥⌘ U" }, { label: "新規外部MIDIトラック", keys: "⌥⌘ X" }],
  [{ label: "使用されていないトラックを削除", keys: "⇧⌘⌫" }],
  [{ label: "すべてのトラックのハイドモードを解除", keys: "^⇧ H", disabled: true }, { label: "非表示を切り替え", keys: "H", checked: true }],
  [{ label: "トラックヘッダコンポーネント", sub: true }, { label: "トラックヘッダを設定...", keys: "⌥ T" }, { label: "ユーザデフォルトとして保存" }, { label: "ユーザデフォルトを適用" }, { label: "デフォルトに戻す" }],
];

@customElement("context-menu")
class ContextMenu extends LitElement {
  static styles = [shared, css`
    :host { display: block; padding: 3px 9px 5px 5px; background: #ececec; border-radius: 4px; color: #333; box-shadow: 0 3px 10px #0009; font-size: 8px; font-weight: 500; font-feature-settings: "palt"; }
    ul + ul { position: relative; padding-top: 8px; }
    ul + ul::before { content: ""; position: absolute; top: 4px; left: 10px; right: 0; height: 1px; background: #cfcfcf; }
    ul:last-child { padding-top: 9px; }
    button { width: 100%; height: 14px; padding-left: 1px; justify-content: flex-start; }
    .check { width: 9px; flex: none; }
    .keys { margin-left: auto; color: #a8a8a8; font-weight: 400; }
    button:disabled { color: #b0b0b0; }
    .sub { margin-left: auto; }
  `];
  render() {
    return html`${menu.map((g) => html`<ul role="menu">${g.map((m) => html`<li role="none"><button role="menuitem" ?disabled=${!!m.disabled}>
      <span class="check">${m.checked ? icon(7, 8, svg`<path d="M1 4.500 2.700 7 6 1"/>`) : nothing}</span>${m.label}
      ${m.keys ? html`<span class="keys">${m.keys}</span>` : nothing}${m.sub ? html`<span class="sub">${icon(5, 8, svg`<path d="M1 1l3 3-3 3"/>`)}</span>` : nothing}</button></li>`)}</ul>`)}`;
  }
}

@customElement("app-root")
class AppRoot extends LitElement {
  static styles = [shared, css`
    :host { display: flex; flex-direction: column; position: relative; height: 100vh; overflow: hidden; background: #2a2a2a; font-family: Inter, "Noto Sans CJK JP", "DejaVu Sans", sans-serif; }
    .body { display: grid; grid-template-columns: 168px minmax(0, 1fr); grid-template-rows: minmax(0, 1fr); flex: 1; min-height: 0; border-top: 1px solid #333; }
    context-menu { position: absolute; left: 336px; top: 418px; width: 235px; }
    .frame { position: absolute; left: 341px; top: 417px; width: 231px; height: 65px; border: 6px solid #e9116a; border-radius: 3px; box-shadow: 0 2px 4px #0008, inset 0 1px 3px #0006; }
    .marks { position: absolute; left: 0; top: 0; filter: drop-shadow(1px 2px 2px #0008); pointer-events: none; }
    .note { position: absolute; left: 17px; top: 349px; margin: 0; font: 700 24px/36px "Noto Sans CJK JP", sans-serif; color: #ee1a6c; -webkit-text-stroke: 4px #fff; paint-order: stroke fill; white-space: nowrap; filter: drop-shadow(1px 2px 1px #0008); }
  `];
  render() {
    return html`
      <control-bar></control-bar>
      <div class="body"><inspector-panel></inspector-panel><arrange-area></arrange-area></div>
      <context-menu></context-menu>
      <div class="frame"></div>
      <p class="note">何もないところを右クリック</p>
      <svg class="marks" width="600" height="600" viewBox="0 0 600 600" aria-hidden="true">
        <g fill="#dd1260" stroke="#fff" stroke-width="4" stroke-linejoin="round" paint-order="stroke">
          <path d="M132.500 396.500 134.500 395.500 195 555 201.500 553 199 574 184 559.500 190 557z"/>
          <path d="M243 570 242 568 336.500 496.500 333 491.500 355 490 343.500 507 340.500 502z"/>
        </g>
      </svg>`;
  }
}
